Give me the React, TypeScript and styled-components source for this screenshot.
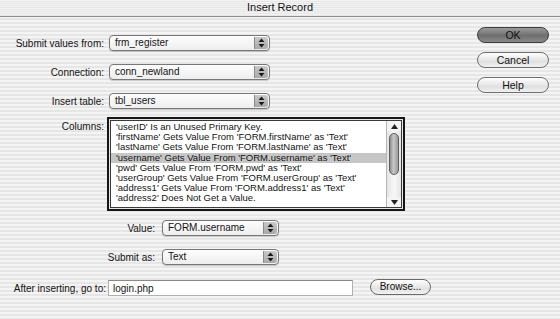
import React from 'react';
import styled, { createGlobalStyle } from 'styled-components';

const columns = [
  "'userID' Is an Unused Primary Key.",
  "'firstName' Gets Value From 'FORM.firstName' as 'Text'",
  "'lastName' Gets Value From 'FORM.lastName' as 'Text'",
  "'username' Gets Value From 'FORM.username' as 'Text'",
  "'pwd' Gets Value From 'FORM.pwd' as 'Text'",
  "'userGroup' Gets Value From 'FORM.userGroup' as 'Text'",
  "'address1' Gets Value From 'FORM.address1' as 'Text'",
  "'address2' Does Not Get a Value.",
];

const SELECTED = 3;

const ArrowCap: React.FC = () => (
  <Cap>
    <svg width="7" height="10" viewBox="0 0 7 10">
      <path d="M3.5 0.5 L6.5 4 L0.5 4 Z" fill="#1a1a1a" />
      <path d="M3.5 9.5 L6.5 6 L0.5 6 Z" fill="#1a1a1a" />
    </svg>
  </Cap>
);

const Popup: React.FC<{ width: number; value: string }> = ({ width, value }) => (
  <PopupBox $width={width}>
    <PopupText>{value}</PopupText>
    <ArrowCap />
  </PopupBox>
);

const App: React.FC = () => {
  return (
    <>
      <GlobalStyle />
      <Dialog>
        <TitleBar>Insert Record</TitleBar>
        <Body>
          <Form>
            <Row $gap={0}>
              <Label $width={96} $space={5}>Submit values from:</Label>
              <Popup width={161} value="frm_register" />
            </Row>
            <Row $gap={13}>
              <Label $width={96} $space={5}>Connection:</Label>
              <Popup width={161} value="conn_newland" />
            </Row>
            <Row $gap={13}>
              <Label $width={96} $space={5}>Insert table:</Label>
              <Popup width={161} value="tbl_users" />
            </Row>
            <Row $gap={8} $top>
              <Label $width={96} $space={3} $offset={4}>Columns:</Label>
              <ListBox>
                <ListItems>
                  {columns.map((c, i) => (
                    <ListItem key={c} $selected={i === SELECTED}>{c}</ListItem>
                  ))}
                </ListItems>
                <Scrollbar>
                  <ScrollArrow>
                    <svg width="7" height="5" viewBox="0 0 7 5">
                      <path d="M3.5 0 L7 5 L0 5 Z" fill="#222" />
                    </svg>
                  </ScrollArrow>
                  <Track>
                    <Thumb />
                  </Track>
                  <ScrollArrow>
                    <svg width="7" height="5" viewBox="0 0 7 5">
                      <path d="M3.5 5 L7 0 L0 0 Z" fill="#222" />
                    </svg>
                  </ScrollArrow>
                </Scrollbar>
              </ListBox>
            </Row>
            <Row $gap={9}>
              <Label $width={147} $space={7}>Value:</Label>
              <Popup width={117} value="FORM.username" />
            </Row>
            <Row $gap={13}>
              <Label $width={147} $space={7}>Submit as:</Label>
              <Popup width={117} value="Text" />
            </Row>
            <Row $gap={15}>
              <Label $width={98} $space={2}>After inserting, go to:</Label>
              <TextField>login.php</TextField>
              <BrowseButton>Browse...</BrowseButton>
            </Row>
          </Form>
          <ButtonColumn>
            <PillButton $primary>OK</PillButton>
            <PillButton>Cancel</PillButton>
            <PillButton>Help</PillButton>
          </ButtonColumn>
        </Body>
      </Dialog>
    </>
  );
};

const GlobalStyle = createGlobalStyle`
  html, body {
    margin: 0;
    padding: 0;
    background: #ececec;
  }
`;

const Dialog = styled.div`
  width: 560px;
  height: 319px;
  overflow: hidden;
  font-family: 'Liberation Sans', Arial, sans-serif;
  font-size: 10px;
  color: #141414;
  background: repeating-linear-gradient(
    to bottom,
    #f4f4f4 0px,
    #f4f4f4 2px,
    #e6e6e6 2px,
    #e6e6e6 4px
  );
`;

const TitleBar = styled.div`
  height: 16px;
  line-height: 15px;
  text-align: center;
  font-size: 11px;
  color: #111;
  border-bottom: 1px solid #8c8c8c;
  background: repeating-linear-gradient(
    to bottom,
    #f4f4f4 0px,
    #f4f4f4 1px,
    #e6e6e6 1px,
    #e6e6e6 2px
  );
`;

const Body = styled.div`
  display: flex;
  align-items: flex-start;
`;

const Form = styled.div`
  width: 477px;
  display: flex;
  flex-direction: column;
  padding: 18px 0 0 8px;
  box-sizing: border-box;
`;

const Row = styled.div<{ $gap: number; $top?: boolean }>`
  display: flex;
  align-items: ${(p) => (p.$top ? 'flex-start' : 'center')};
  margin-top: ${(p) => p.$gap}px;
`;

const Label = styled.div<{ $width: number; $space: number; $offset?: number }>`
  width: ${(p) => p.$width}px;
  margin-right: ${(p) => p.$space}px;
  margin-top: ${(p) => p.$offset || 0}px;
  text-align: right;
  white-space: nowrap;
  flex-shrink: 0;
`;

const PopupBox = styled.div<{ $width: number }>`
  width: ${(p) => p.$width}px;
  height: 16px;
  box-sizing: border-box;
  display: flex;
  align-items: stretch;
  border: 1px solid #777;
  border-radius: 4px;
  background: linear-gradient(#fdfdfd, #eeeeee);
  box-shadow: 0 1px 1px rgba(0, 0, 0, 0.18);
  overflow: hidden;
`;

const PopupText = styled.div`
  flex: 1;
  padding-left: 5px;
  line-height: 14px;
  white-space: nowrap;
  overflow: hidden;
`;

const Cap = styled.div`
  width: 13px;
  margin: 1px 1px 1px 0;
  border-radius: 0 3px 3px 0;
  display: flex;
  align-items: center;
  justify-content: center;
  background: linear-gradient(#c9c9c9, #a9a9a9);
  border-left: 1px solid #8a8a8a;
`;

const ListBox = styled.div`
  width: 298px;
  height: 94px;
  box-sizing: border-box;
  border: 2px solid #161616;
  display: flex;
  background: #fff;
  box-shadow: inset 0 0 0 1px #e6e6e6, inset 0 0 0 2px #3a3a3a;
  padding: 2px;
  overflow: hidden;
`;

const ListItems = styled.div`
  flex: 1;
  padding-top: 1px;
  overflow: hidden;
  font-size: 9.5px;
`;

const ListItem = styled.div<{ $selected: boolean }>`
  height: 10.2px;
  line-height: 10.2px;
  padding-left: 5px;
  white-space: nowrap;
  background: ${(p) => (p.$selected ? '#c6c6c6' : 'transparent')};
`;

const Scrollbar = styled.div`
  width: 14px;
  display: flex;
  flex-direction: column;
  border-left: 1px solid #b5b5b5;
  background: #f4f4f4;
`;

const ScrollArrow = styled.div`
  height: 10px;
  display: flex;
  align-items: center;
  justify-content: center;
`;

const Track = styled.div`
  flex: 1;
  display: flex;
  justify-content: center;
  background: linear-gradient(to right, #e4e4e4, #f8f8f8, #e4e4e4);
`;

const Thumb = styled.div`
  width: 10px;
  height: 42px;
  margin-top: 2px;
  box-sizing: border-box;
  border: 1px solid #5e5e5e;
  border-radius: 5px;
  background: linear-gradient(to right, #8e8e8e, #c8c8c8 45%, #9a9a9a);
`;

const TextField = styled.div`
  width: 245px;
  height: 16px;
  box-sizing: border-box;
  padding-left: 4px;
  line-height: 15px;
  background: #fff;
  border: 1px solid #b0b0b0;
  border-top-color: #8a8a8a;
`;

const BrowseButton = styled.div`
  width: 61px;
  height: 16px;
  margin-left: 17px;
  margin-top: -2px;
  box-sizing: border-box;
  border: 1px solid #6a6a6a;
  border-radius: 8px;
  background: linear-gradient(#ffffff, #e2e2e2 60%, #f2f2f2);
  text-align: center;
  line-height: 14px;
  font-size: 10px;
`;

const ButtonColumn = styled.div`
  display: flex;
  flex-direction: column;
  gap: 9px;
  padding-top: 10px;
`;

const PillButton = styled.div<{ $primary?: boolean }>`
  width: 72px;
  height: 16px;
  box-sizing: border-box;
  border: 1px solid ${(p) => (p.$primary ? '#3c3c3c' : '#6e6e6e')};
  border-radius: 8px;
  text-align: center;
  line-height: 14px;
  font-size: 10.5px;
  color: #111;
  background: ${(p) =>
    p.$primary
      ? 'linear-gradient(#9a9a9a, #6e6e6e 55%, #8a8a8a)'
      : 'linear-gradient(#ffffff, #e0e0e0 60%, #f0f0f0)'};
`;

export default App;
